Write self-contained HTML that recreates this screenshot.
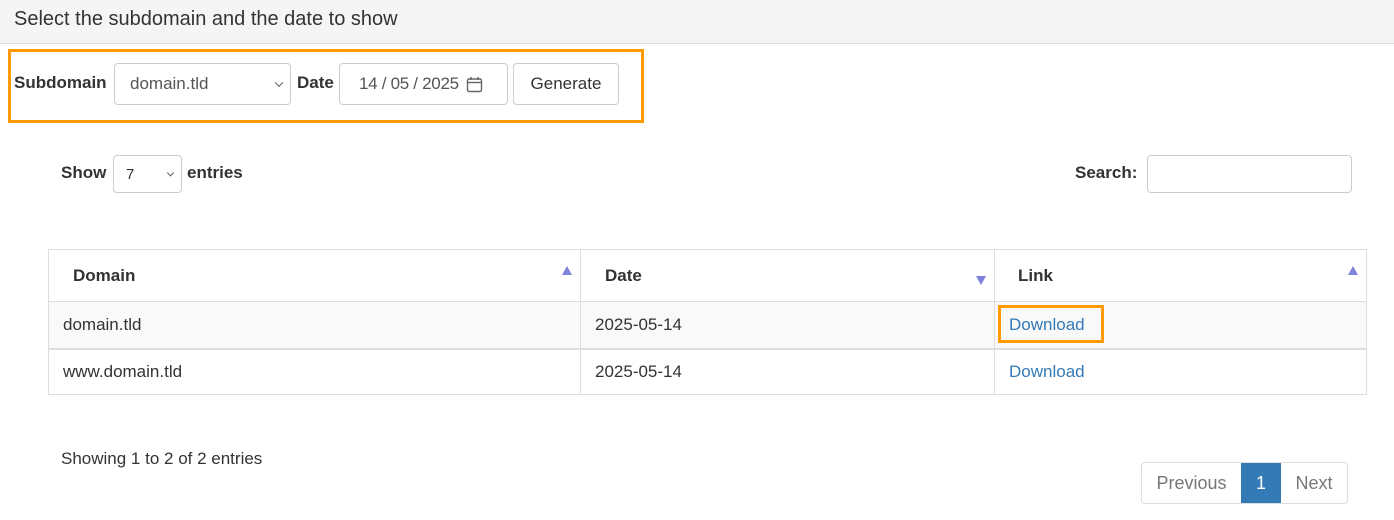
<!DOCTYPE html>
<html><head><style>
*{box-sizing:border-box;margin:0;padding:0}
body{width:1394px;height:520px;background:#fff;font-family:"Liberation Sans",sans-serif;color:#333;position:relative;overflow:hidden;font-size:17px}
.a{position:absolute}
.hdr{left:0;top:0;width:1394px;height:44px;background:#f5f5f5;border-bottom:1px solid #ddd;font-size:20px;padding:8px 14px}
.box{left:8px;top:49px;width:636px;height:74px;border:3px solid #ff9a00}
.lbl{font-weight:bold;font-size:17px}
.inp{border:1px solid #ccc;border-radius:4px;background:#fff;font-size:17px;color:#555;display:flex;align-items:center}
.chev{position:absolute;right:8px;top:50%;width:6px;height:6px;border-right:1px solid #555;border-bottom:1px solid #555;transform:translateY(-70%) rotate(45deg)}
table{border-collapse:collapse;font-size:17px}
td,th{border:1px solid #ddd;text-align:left;position:relative}
th{height:52px;padding-left:24px;font-weight:bold}
td{padding-left:14px}
.up,.dn{position:absolute;right:8px;width:0;height:0;border-left:5px solid transparent;border-right:5px solid transparent}
.up{top:16px;border-bottom:9px solid #7f82dc}
.dn{bottom:16px;border-top:9px solid #7f82dc}
a{color:#337ab7;text-decoration:none}
</style></head><body>
<div class="a hdr">Select the subdomain and the date to show</div>
<div class="a box"></div>
<div class="a lbl" style="left:14px;top:73px">Subdomain</div>
<div class="a inp" style="left:114px;top:63px;width:177px;height:42px;padding-left:15px">domain.tld<span class="chev"></span></div>
<div class="a lbl" style="left:297px;top:73px">Date</div>
<div class="a inp" style="left:339px;top:63px;width:169px;height:42px;padding-left:19px;letter-spacing:-0.3px">14 / 05 / 2025
<svg style="margin-left:7px" width="17" height="17" viewBox="0 0 17 17"><rect x="1.5" y="3" width="14" height="12.5" rx="1.5" fill="none" stroke="#666" stroke-width="1.4"/><line x1="1.5" y1="6.5" x2="15.5" y2="6.5" stroke="#666" stroke-width="1.4"/><line x1="5" y1="1" x2="5" y2="4" stroke="#666" stroke-width="1.4"/><line x1="12" y1="1" x2="12" y2="4" stroke="#666" stroke-width="1.4"/></svg></div>
<div class="a inp" style="left:513px;top:63px;width:106px;height:42px;justify-content:center;color:#333">Generate</div>

<div class="a lbl" style="left:61px;top:163px">Show</div>
<div class="a inp" style="left:113px;top:155px;width:69px;height:38px;padding-left:12px;font-size:15px;color:#333">7<span class="chev" style="width:5px;height:5px"></span></div>
<div class="a lbl" style="left:187px;top:163px">entries</div>
<div class="a lbl" style="left:1075px;top:163px">Search:</div>
<div class="a inp" style="left:1147px;top:155px;width:205px;height:38px"></div>

<table class="a" style="left:48px;top:249px;width:1319px">
<tr><th style="width:532px">Domain<span class="up"></span></th><th style="width:414px">Date<span class="dn"></span></th><th style="padding-left:23px">Link<span class="up"></span></th></tr>
<tr style="background:#f9f9f9;height:47px;border-bottom:2px solid #ddd"><td>domain.tld</td><td>2025-05-14</td><td><a href="#">Download</a></td></tr>
<tr style="height:46px"><td>www.domain.tld</td><td>2025-05-14</td><td><a href="#">Download</a></td></tr>
</table>
<div class="a" style="left:998px;top:305px;width:106px;height:38px;border:3px solid #ff9a00"></div>

<div class="a" style="left:61px;top:449px">Showing 1 to 2 of 2 entries</div>
<div class="a" style="left:1141px;top:462px;height:42px;display:flex;font-size:18px;border:1px solid #ddd;border-radius:4px;overflow:hidden">
<div style="width:99px;display:flex;align-items:center;justify-content:center;color:#777">Previous</div>
<div style="width:40px;display:flex;align-items:center;justify-content:center;background:#337ab7;color:#fff">1</div>
<div style="width:66px;display:flex;align-items:center;justify-content:center;color:#777">Next</div>
</div>
</body></html>
